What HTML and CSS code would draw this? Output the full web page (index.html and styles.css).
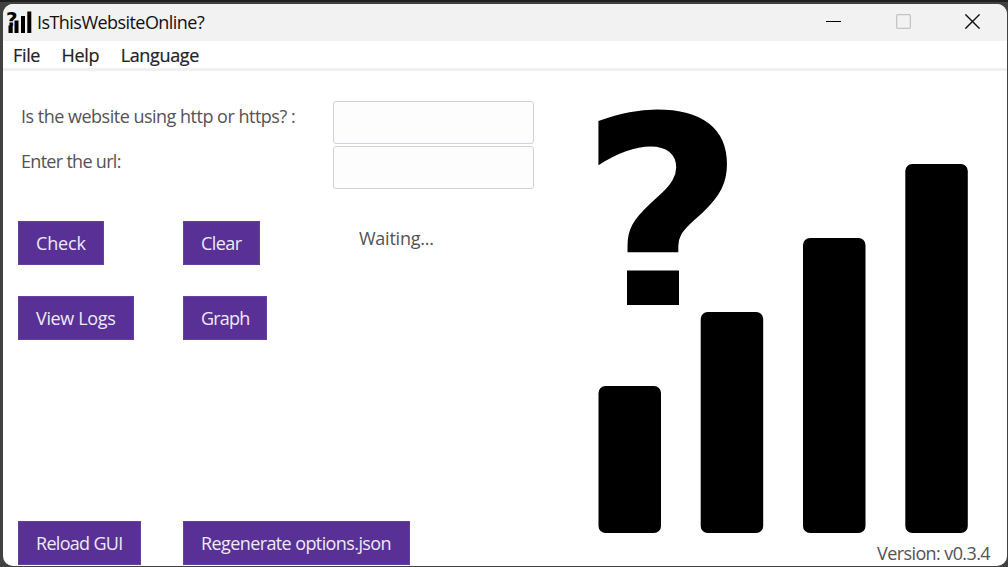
FILE: index.html
```html
<!DOCTYPE html>
<html lang="en">
<head>
<meta charset="utf-8">
<title>IsThisWebsiteOnline?</title>
<link rel="stylesheet" href="styles.css">
</head>
<body>
<div class="window">
  <header class="titlebar">
    <svg class="app-icon" width="25" height="24" viewBox="0 0 25 24">
      <path d="M1.500 15.500h4.200v7.500H1.500zM7.500 10.500h4v12.500h-4zM14 6h4v17h-4zM20.300 1.500h4v21.500h-4z"/>
      <text class="mark" x="-0.900" y="15.500" font-size="20">?</text>
    </svg>
    <h1 class="title">IsThisWebsiteOnline?</h1>
    <div class="controls">
      <svg width="15" height="15" viewBox="0 0 15 15"><path d="M0 7.500h15" stroke="#000"/></svg>
      <svg width="15" height="15" viewBox="0 0 15 15"><rect x=".65" y=".65" width="13.700" height="13.700" rx="1" fill="none" stroke="#c4c4c4" stroke-width="1.300"/></svg>
      <svg width="15" height="15" viewBox="0 0 15 15"><path d="M.4.400l14.200 14.200M14.600.400L.4 14.600" stroke="#111" stroke-width="1.400"/></svg>
    </div>
  </header>
  <nav class="menubar"><span>File</span><span>Help</span><span>Language</span></nav>
  <main class="content">
    <section class="panel">
      <div class="field"><label for="proto">Is the website using http or https? :</label><input id="proto" class="entry"></div>
      <div class="field"><label class="l-url" for="url">Enter the url:</label><input id="url" class="entry"></div>
      <div class="actions first">
        <button class="btn check">Check</button>
        <button class="btn clear">Clear</button>
        <span class="status">Waiting...</span>
      </div>
      <div class="actions">
        <button class="btn logs">View Logs</button>
        <button class="btn graph">Graph</button>
      </div>
      <div class="actions last">
        <button class="btn reload">Reload GUI</button>
        <button class="btn regen">Regenerate options.json</button>
      </div>
    </section>
    <aside class="brand">
      <svg class="logo" width="380" height="434" viewBox="590 100 380 434">
        <clipPath id="hook"><rect x="590" y="100" width="150" height="160"/></clipPath>
        <g clip-path="url(#hook)"><text class="mark" x="578.600" y="323.200" font-size="288">?</text></g>
        <rect x="627" y="270.500" width="52" height="34.500"/>
        <g>
          <rect x="598.500" y="386" width="62.500" height="147" rx="7"/>
          <rect x="700.700" y="312" width="62.500" height="221" rx="7"/>
          <rect x="803" y="238" width="62.500" height="295" rx="7"/>
          <rect x="905.300" y="164" width="62.500" height="369" rx="7"/>
        </g>
      </svg>
      <p class="version">Version: v0.3.4</p>
    </aside>
  </main>
</div>
</body>
</html>
```
FILE: styles.css
```css
* { box-sizing: border-box; }
body {
  margin: 0;
  height: 567px;
  overflow: hidden;
  background: linear-gradient(#202020 0 2px, #414141 2px 100%);
  font-family: "Open Sans", sans-serif;
  font-size: 18px;
  color: #545257;
  padding: 4px 1px 1px 3px;
}
.window {
  height: 562px;
  border-radius: 10px;
  background: #fff;
  overflow: hidden;
  display: flex;
  flex-direction: column;
}
.titlebar {
  height: 37px;
  flex: none;
  background: #f2f2f2;
  display: flex;
  align-items: center;
  padding: 0 27px 2px 4px;
}
.mark { font-family: "DejaVu Sans", sans-serif; font-weight: bold; }
.app-icon, .logo { overflow: visible; }
.title {
  margin: 0 0 0 5px;
  font-size: 18px;
  line-height: 24px;
  font-weight: 400;
  color: #111;
  letter-spacing: -0.55px;
}
.controls { margin-left: auto; display: flex; gap: 54.500px; }
.menubar {
  height: 30px;
  flex: none;
  border-bottom: 3px solid #f0f0f0;
  padding-left: 10px;
  display: flex;
  gap: 21.5px;
  line-height: 28px;
  letter-spacing: -0.35px;
  color: #222;
  -webkit-text-stroke: 0.2px #222;
}
.content { display: flex; flex: 1; }
.panel { width: 584px; padding: 30px 0 0 15px; display: flex; flex-direction: column; }
.field { display: grid; grid-template-columns: 315px 201px; height: 45px; }
.field label { padding-left: 3px; line-height: 30px; white-space: nowrap; letter-spacing: -0.5px; }
.field .l-url { letter-spacing: -0.7px; }
.entry {
  width: 201px;
  height: 43px;
  border: 1.5px solid #d3d0d9;
  border-radius: 3px;
  background: #fdfdfd;
  outline: 0;
}
.actions { display: grid; grid-template-columns: 165px 176px 1fr; height: 45px; margin-bottom: 30px; }
.first { margin-top: 30px; }
.last { margin-top: 150px; margin-bottom: 0; }
.btn {
  border: 1px solid #62429c;
  background: #593196;
  color: #eeeaf4;
  font: inherit;
  height: 43.5px;
  padding: 0 0 0 17px;
  text-align: left;
  white-space: nowrap;
  letter-spacing: -0.55px;
}
.check { width: 86px; letter-spacing: -0.15px; }
.clear { width: 77px; }
.logs { width: 116px; letter-spacing: -0.35px; }
.graph { width: 84px; letter-spacing: -0.8px; }
.reload { width: 123px; letter-spacing: -0.7px; }
.regen { width: 227px; letter-spacing: -0.6px; }
.status { line-height: 35px; letter-spacing: -0.25px; }
.brand { flex: 1; padding-top: 29px; display: flex; flex-direction: column; }
.logo { margin-left: 3px; display: block; }
.version { margin: 7px 17px 0 0; text-align: right; line-height: 24px; letter-spacing: -0.6px; }
```
